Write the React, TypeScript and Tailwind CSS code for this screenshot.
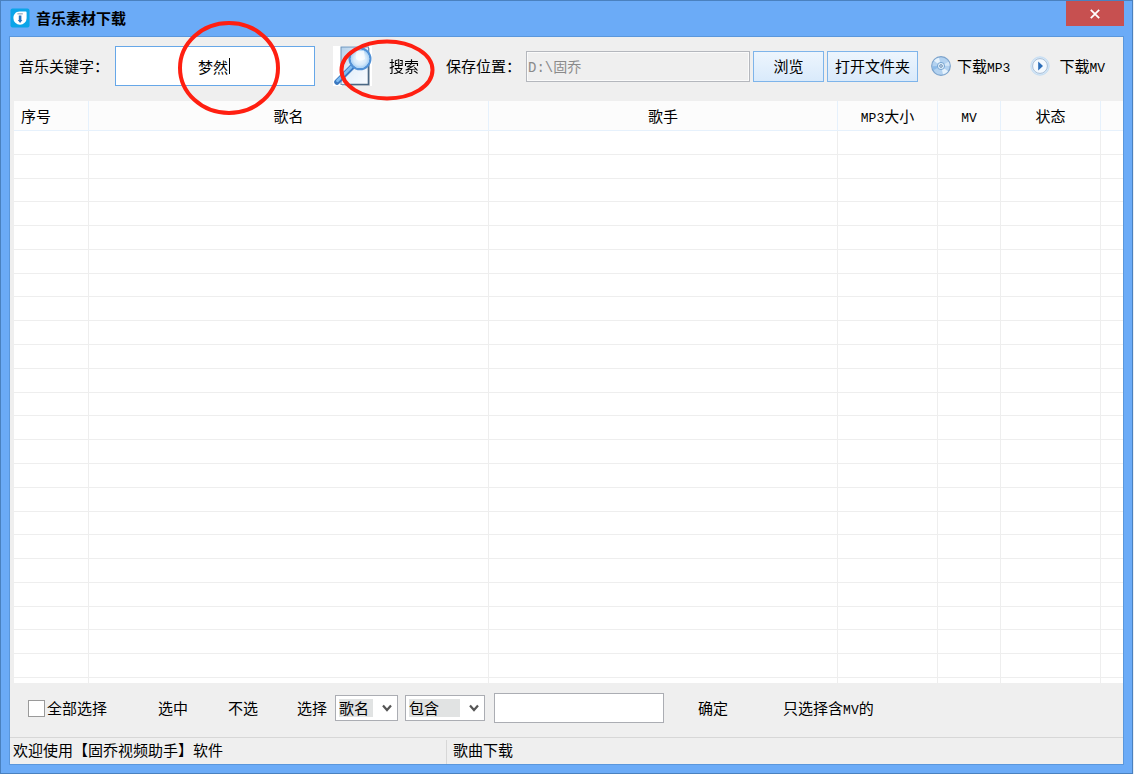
import { useState } from "react";
import type { ReactNode } from "react";

const columns = [
  { label: "序号", width: "w-[75px]", align: "text-left pl-[7px]" },
  { label: "歌名", width: "w-[400px]", align: "text-center" },
  { label: "歌手", width: "", align: "text-center" },
  { label: "MP3大小", width: "w-[100px]", align: "text-center" },
  { label: "MV", width: "w-[63px]", align: "text-center" },
  { label: "状态", width: "w-[100px]", align: "text-center" },
  { label: "", width: "w-[22px]", align: "" },
];

const ROW_COUNT = 23;

// Latin runs are set smaller so that they keep half the width of a Chinese character
function Mixed({ text }: { text: string }) {
  const parts = text.split(/([A-Z0-9]+)/).filter(Boolean);
  return (
    <>
      {parts.map((part, idx) =>
        /^[A-Z0-9]/.test(part) ? (
          <span key={idx} className="font-['Liberation_Mono',monospace] text-[13px] leading-none">
            {part}
          </span>
        ) : (
          part
        ),
      )}
    </>
  );
}

function AppIcon() {
  return (
    <svg viewBox="0 0 20 20" className="h-5 w-5" aria-hidden="true">
      <rect x="0.5" y="0.5" width="19" height="19" rx="2" fill="#0aa4e8" />
      <path
        d="M9.5 3.4h6c.8 0 1.1.4 1.1 1.1v5.7a6.6 6.6 0 0 1-13.2 0c0-4 2.4-6.8 6.1-6.8z"
        fill="#fff"
      />
      <path d="M7.4 5.8h5.4" stroke="#9fb4c4" strokeWidth="1.4" />
      <path d="M8.8 7.4h2.6v4.6h1L10.1 15l-2.3-3h1z" fill="#2873bd" />
    </svg>
  );
}

function SearchIcon() {
  return (
    <svg viewBox="0 0 39 40" className="h-10 w-[39px]" aria-hidden="true">
      <defs>
        <linearGradient id="page" x1="0" y1="0" x2="1" y2="1">
          <stop offset="0" stopColor="#b4d0ea" />
          <stop offset="0.5" stopColor="#e6f0fa" />
          <stop offset="1" stopColor="#fafcff" />
        </linearGradient>
        <radialGradient id="lens">
          <stop offset="0" stopColor="#f6fbff" />
          <stop offset="0.6" stopColor="#d7eafa" />
          <stop offset="1" stopColor="#9cc8f0" />
        </radialGradient>
      </defs>
      <rect width="39" height="40" fill="#fff" />
      <rect x="9" y="2" width="28" height="38" fill="#d3d6da" />
      <rect x="8" y="1" width="27.5" height="37.5" fill="url(#page)" stroke="#6d93bb" />
      <path d="M35.5 18v20.5H12" fill="none" stroke="#4b6884" strokeWidth="1.6" />
      <path d="M18.5 21.5 4 36" stroke="#3a78c0" strokeWidth="5.5" strokeLinecap="round" />
      <path d="M18.5 20.8 4.5 34.8" stroke="#7fbcf2" strokeWidth="2.8" strokeLinecap="round" />
      <circle cx="27" cy="12.8" r="10.4" fill="url(#lens)" stroke="#5191d6" strokeWidth="2.2" />
      <circle cx="27" cy="12.8" r="8.8" fill="none" stroke="#b4d8f8" strokeWidth="1" />
      <path d="M24 5h7l1 8c-3 2-7 2-9 0-1-3 0-6 1-8z" fill="#fff" opacity="0.7" />
    </svg>
  );
}

function DiscIcon() {
  return (
    <svg viewBox="0 0 20 20" className="h-5 w-5" aria-hidden="true">
      <circle cx="10" cy="10" r="9.3" fill="#b3d2f0" stroke="#7ca3cc" strokeWidth="1.2" />
      <path d="M10 10 3 4.8A9 9 0 0 1 8 1.8z" fill="#e6f2fc" />
      <path d="m10 10 7 5.2a9 9 0 0 1-5 3z" fill="#e6f2fc" />
      <path d="m10 10 7.6-4.2a9 9 0 0 1 1 4z" fill="#d4e7f8" />
      <path d="m10 10-7.6 4.2a9 9 0 0 1-1-4z" fill="#8dbbe8" />
      <circle cx="10" cy="10" r="3.6" fill="#dcecf9" stroke="#6f9fce" strokeWidth="0.9" />
      <circle cx="10" cy="10" r="1.3" fill="#fff" stroke="#4f7ba8" strokeWidth="0.9" />
    </svg>
  );
}

function PlayIcon() {
  return (
    <svg viewBox="0 0 20 20" className="h-5 w-5" aria-hidden="true">
      <circle cx="10" cy="10" r="9.2" fill="#d5e8f8" stroke="#c4dcf2" strokeWidth="1" />
      <circle cx="10" cy="10" r="7.4" fill="#f4f9fe" stroke="#a3b8d0" strokeWidth="0.9" />
      <path d="M8.2 5.4 13 10l-4.8 4.6z" fill="#2d6fba" />
    </svg>
  );
}

function Chevron() {
  return (
    <svg viewBox="0 0 10 8" className="h-2 w-[10px]" aria-hidden="true">
      <path d="M1 1.5 5 6l4-4.5" fill="none" stroke="#555" strokeWidth="2.2" />
    </svg>
  );
}

function PlainButton({ children, className = "" }: { children: ReactNode; className?: string }) {
  return (
    <button type="button" className={`shrink-0 whitespace-nowrap hover:text-[#1c62b0] ${className}`}>
      {children}
    </button>
  );
}

export default function App() {
  const [keyword, setKeyword] = useState("梦然");
  const [field, setField] = useState("歌名");
  const [rule, setRule] = useState("包含");

  return (
    <div className="h-screen bg-[#e8eef5] pr-px font-['Noto_Sans_CJK_SC',sans-serif] text-[15px] leading-5 text-black">
      <div className="flex h-full flex-col border border-[#4a81bf] bg-[#6babf7] px-2 pb-2">
        {/* Title bar */}
        <header className="flex h-[35px] shrink-0 items-center">
          <div className="flex grow items-center gap-[6px] pb-[2px] pl-px">
            <AppIcon />
            <h1 className="font-bold">音乐素材下载</h1>
          </div>
          <button
            type="button"
            aria-label="关闭"
            className="flex h-[25px] w-[58px] items-center justify-center self-start bg-[#c75050] hover:bg-[#e04343]"
          >
            <svg viewBox="0 0 10 10" className="h-[10px] w-[10px]" aria-hidden="true">
              <path d="m.8.8 8.4 8.4M9.2.8.8 9.2" stroke="#fff" strokeWidth="1.8" />
            </svg>
          </button>
        </header>

        <main className="flex min-h-0 grow flex-col border border-[#5a97dc] bg-[#efefef]">
          {/* Search and download toolbar */}
          <form
            className="flex h-16 shrink-0 items-center pr-[18px] pb-[6px] pl-[9px]"
            onSubmit={(e) => e.preventDefault()}
          >
            <label htmlFor="keyword" className="shrink-0">
              音乐关键字：
            </label>
            <div className="relative ml-[6px] w-[200px] shrink-0">
              <input
                id="keyword"
                type="text"
                autoFocus
                value={keyword}
                onChange={(e) => setKeyword(e.target.value)}
                className="h-10 w-full border border-[#66a7e8] bg-white pr-1 text-center caret-transparent outline-none"
              />
              {/* Text cursor, kept at the end of the centred keyword */}
              <div
                className="pointer-events-none absolute inset-0 flex items-center justify-center pr-1"
                aria-hidden="true"
              >
                <span
                  className="h-4 border-r border-black"
                  style={{ width: keyword.length * 15 + 4 }}
                />
              </div>
              <svg
                viewBox="0 0 102 96"
                className="pointer-events-none absolute -top-[26px] left-[63px] z-10 h-24 w-[102px]"
                aria-hidden="true"
              >
                <ellipse cx="51" cy="48" rx="49" ry="45" fill="none" stroke="#ff1f11" strokeWidth="4" />
              </svg>
            </div>
            <button type="submit" className="relative ml-[18px] flex shrink-0 items-center gap-[17px]">
              <SearchIcon />
              搜索
              <svg
                viewBox="0 0 96 62"
                className="pointer-events-none absolute -top-[7px] left-[6px] z-10 h-[62px] w-24"
                aria-hidden="true"
              >
                <ellipse cx="48" cy="31" rx="45.5" ry="28.5" fill="none" stroke="#ff1f11" strokeWidth="4" />
              </svg>
            </button>
            <label htmlFor="path" className="ml-[27px] shrink-0">
              保存位置：
            </label>
            <input
              id="path"
              type="text"
              readOnly
              value="D:\固乔"
              className="ml-[5px] h-[31px] min-w-0 grow border border-[#b4b7bd] bg-[#efefef] px-px font-['Liberation_Mono','Noto_Sans_CJK_SC',monospace] text-[14px] text-[#8a8a8a] shadow-[inset_0_0_0_1px_#fafafa] outline-none"
            />
            <button
              type="button"
              className="ml-[3px] h-[31px] w-[71px] shrink-0 border border-[#7eb4ea] bg-linear-to-b from-[#edf5fd] to-[#d9eafb] hover:to-[#c4dffb]"
            >
              浏览
            </button>
            <button
              type="button"
              className="ml-[3px] h-[31px] w-[91px] shrink-0 border border-[#7eb4ea] bg-linear-to-b from-[#edf5fd] to-[#d9eafb] hover:to-[#c4dffb]"
            >
              打开文件夹
            </button>
            <PlainButton className="ml-[13px] flex items-center gap-[6px]">
              <DiscIcon />
              <span>
                <Mixed text="下载MP3" />
              </span>
            </PlainButton>
            <PlainButton className="ml-5 flex items-center gap-[9px]">
              <PlayIcon />
              <span>
                <Mixed text="下载MV" />
              </span>
            </PlainButton>
          </form>

          {/* Song list */}
          <div className="ml-1 min-h-0 grow overflow-hidden bg-white">
            <table className="h-full w-full table-fixed border-separate border-spacing-0">
              <thead>
                <tr>
                  {columns.map((col, idx) => (
                    <th
                      key={idx}
                      scope="col"
                      className={`h-[30px] border-b border-[#e6f1fc] bg-[#fcfcfc] p-0 font-normal not-last:border-r ${col.width} ${col.align}`}
                    >
                      <Mixed text={col.label} />
                    </th>
                  ))}
                </tr>
              </thead>
              <tbody>
                {Array.from({ length: ROW_COUNT }, (_, row) => (
                  <tr key={row}>
                    {columns.map((_col, idx) => (
                      <td key={idx} className="border-b border-[#eeeeee] p-0 not-last:border-r" />
                    ))}
                  </tr>
                ))}
                <tr>
                  {columns.map((_col, idx) => (
                    <td key={idx} className="h-[5px] border-[#eeeeee] p-0 not-last:border-r" />
                  ))}
                </tr>
              </tbody>
            </table>
          </div>

          {/* Selection tools */}
          <div className="flex h-[54px] shrink-0 items-center pb-1 pl-[18px]">
            <label className="flex shrink-0 items-center gap-[2px]">
              <input
                type="checkbox"
                className="h-[17px] w-[17px] appearance-none border border-[#9a9a9a] bg-white checked:bg-[#3c7fd0]"
              />
              全部选择
            </label>
            <PlainButton className="ml-[51px]">选中</PlainButton>
            <PlainButton className="ml-10">不选</PlainButton>
            <PlainButton className="ml-[39px]">选择</PlainButton>
            <div className="ml-2 flex h-[26px] w-[63px] shrink-0 items-center justify-between border border-[#abadb3] bg-white pr-[5px] pl-[3px]">
              <select
                aria-label="字段"
                value={field}
                onChange={(e) => setField(e.target.value)}
                className="h-[18px] w-[34px] appearance-none bg-[#e1e3e3] leading-[18px] outline-none"
              >
                <option>歌名</option>
                <option>歌手</option>
              </select>
              <Chevron />
            </div>
            <div className="ml-[7px] flex h-[26px] w-20 shrink-0 items-center justify-between border border-[#abadb3] bg-white pr-[5px] pl-[3px]">
              <select
                aria-label="条件"
                value={rule}
                onChange={(e) => setRule(e.target.value)}
                className="h-[18px] w-[51px] appearance-none bg-[#e1e3e3] leading-[18px] outline-none"
              >
                <option>包含</option>
                <option>不包含</option>
              </select>
              <Chevron />
            </div>
            <input
              type="text"
              aria-label="筛选内容"
              className="ml-[9px] h-[30px] w-[170px] border border-[#abadb3] bg-white px-1 outline-none"
            />
            <PlainButton className="ml-[34px]">确定</PlainButton>
            <PlainButton className="ml-[55px]">
              <Mixed text="只选择含MV的" />
            </PlainButton>
          </div>

          {/* Status bar */}
          <footer className="flex h-[27px] shrink-0 border-t border-[#d7d7d7]">
            <div className="mt-[2px] w-[437px] shrink-0 border-r border-[#d7d7d7] pl-[3px]">
              欢迎使用【固乔视频助手】软件
            </div>
            <div className="mt-[2px] grow pl-[6px]">歌曲下载</div>
          </footer>
        </main>
      </div>
    </div>
  );
}
